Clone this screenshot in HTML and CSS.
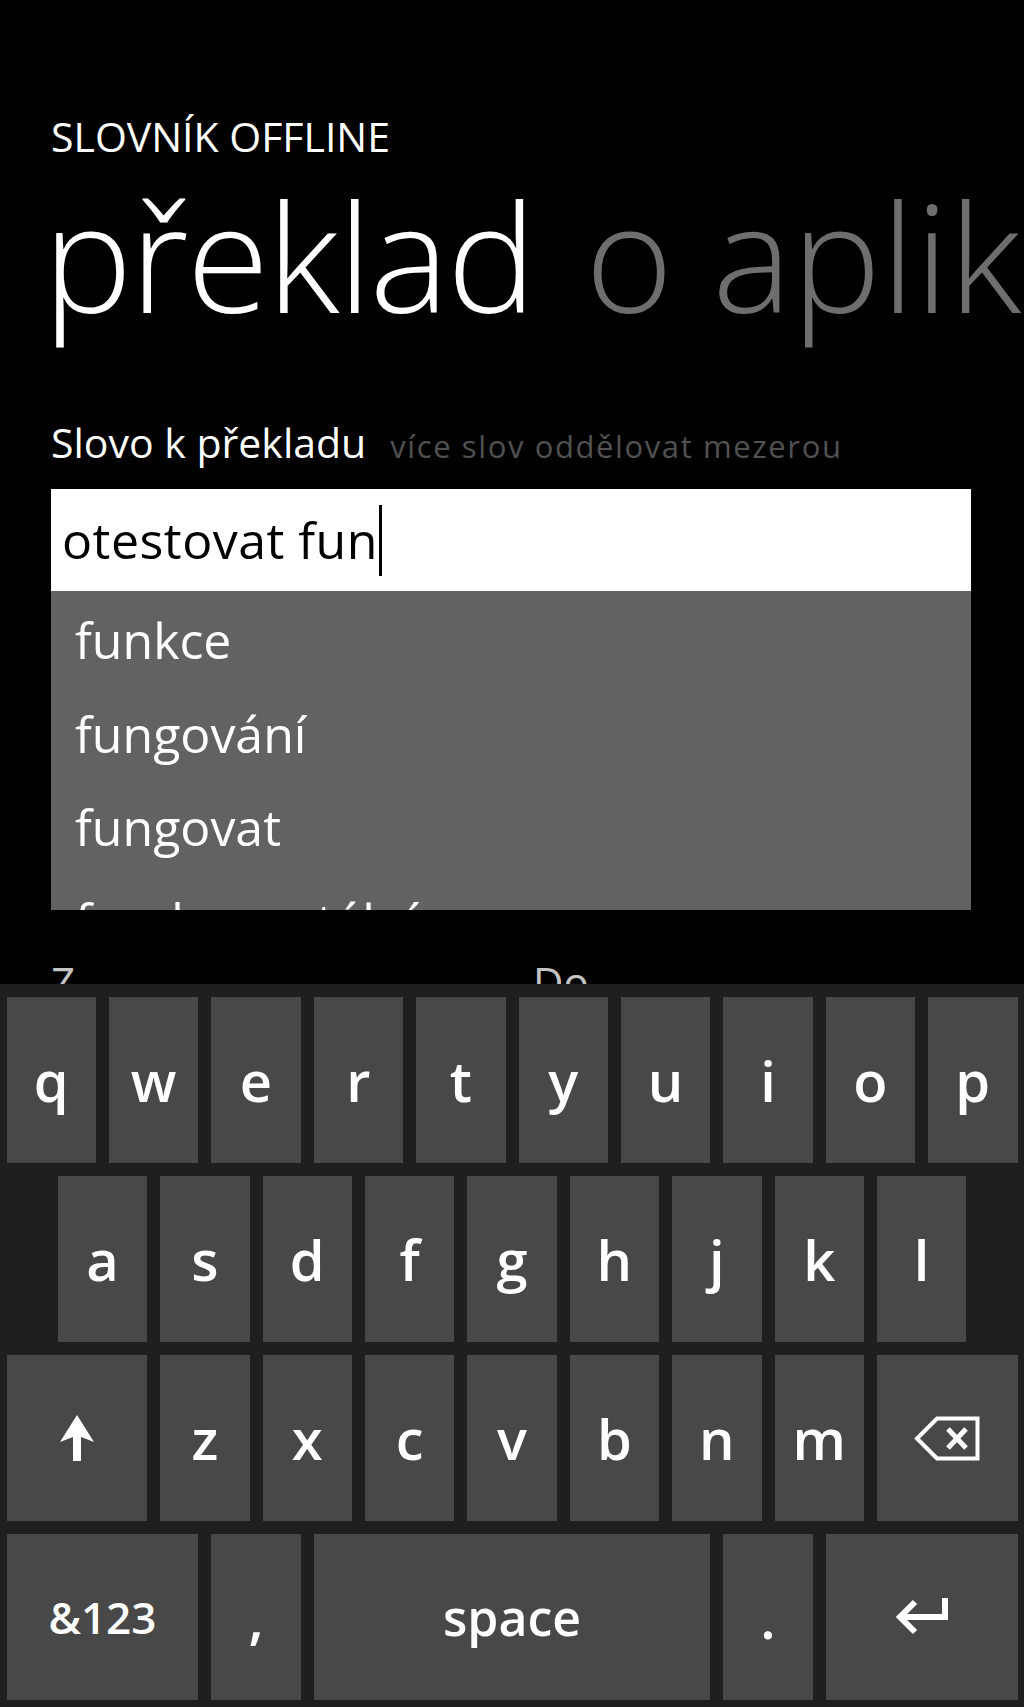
FILE: index.html
```html
<!DOCTYPE html>
<html lang="cs">
<head>
<meta charset="utf-8">
<title>Slovník offline</title>
<link rel="stylesheet" href="styles.css">
</head>
<body>
<div class="phone">
  <div class="content">
    <div class="app-title">SLOVNÍK OFFLINE</div>
    <div class="pivot-headers">
      <span class="pivot active">překlad</span>
      <span class="pivot">o aplikaci</span>
    </div>
    <div class="field-label">
      <span class="label">Slovo k překladu</span>
      <span class="hint">více slov oddělovat mezerou</span>
    </div>
    <div class="input-wrap">
      <div class="textbox"><span class="value">otestovat fun</span><span class="caret"></span></div>
      <ul class="suggestions">
        <li>funkce</li>
        <li>fungování</li>
        <li>fungovat</li>
        <li>fundamentální</li>
      </ul>
    </div>
    <div class="lang-row">
      <span class="lang-label">Z</span>
      <span class="lang-label">Do</span>
    </div>
  </div>
  <div class="keyboard">
    <div class="kb-row">
      <div class="key">q</div><div class="key">w</div><div class="key">e</div><div class="key">r</div><div class="key">t</div>
      <div class="key">y</div><div class="key">u</div><div class="key">i</div><div class="key">o</div><div class="key">p</div>
    </div>
    <div class="kb-row">
      <div class="spacer"></div>
      <div class="key">a</div><div class="key">s</div><div class="key">d</div><div class="key">f</div><div class="key">g</div>
      <div class="key">h</div><div class="key">j</div><div class="key">k</div><div class="key">l</div>
      <div class="spacer"></div>
    </div>
    <div class="kb-row">
      <div class="key wide3">
        <svg class="icon" width="34" height="46" viewBox="0 0 34 46"><path d="M17 0 L34 27 L21 22 L21 46 L13 46 L13 22 L0 27 Z" fill="#fff"/></svg>
      </div>
      <div class="key">z</div><div class="key">x</div><div class="key">c</div><div class="key">v</div>
      <div class="key">b</div><div class="key">n</div><div class="key">m</div>
      <div class="key wide3">
        <svg class="icon" width="66" height="45" viewBox="0 0 66 45"><path d="M23 2.5 H63.5 V42.5 H23 L3 22.5 Z" fill="none" stroke="#fff" stroke-width="4" stroke-linejoin="miter"/><path d="M34 13 L52 32 M52 13 L34 32" stroke="#fff" stroke-width="5"/></svg>
      </div>
    </div>
    <div class="kb-row">
      <div class="key wide4 small">&amp;123</div>
      <div class="key punct">,</div>
      <div class="key wide8 space">space</div>
      <div class="key punct">.</div>
      <div class="key wide4">
        <svg class="icon" width="54" height="38" viewBox="0 0 54 38"><path d="M50 0 V19 H8" fill="none" stroke="#fff" stroke-width="6"/><path d="M20 4 L5 19 L20 34" fill="none" stroke="#fff" stroke-width="6" stroke-linejoin="miter"/></svg>
      </div>
    </div>
  </div>
</div>
</body>
</html>
```

FILE: styles.css
```css
html, body {
  margin: 0;
  padding: 0;
  background: #000;
}

.phone {
  width: 1024px;
  height: 1707px;
  display: flex;
  flex-direction: column;
  background: #000;
  font-family: "Open Sans", "Noto Sans", "DejaVu Sans", sans-serif;
  color: #fff;
  overflow: hidden;
}

.content {
  height: 984px;
  flex: none;
  overflow: hidden;
  padding: 116px 0 0 51px;
  box-sizing: border-box;
}

.app-title {
  font-size: 41px;
  line-height: 41px;
  font-weight: 400;
  white-space: nowrap;
}

.pivot-headers {
  margin-top: 23px;
  margin-left: -8px;
  display: flex;
  gap: 51px;
  white-space: nowrap;
  font-size: 150px;
  line-height: 150px;
  font-weight: 300;
}

.pivot {
  color: #6e6e6e;
}

.pivot.active {
  color: #fff;
  letter-spacing: -2px;
}

.field-label {
  margin-top: 91px;
  display: flex;
  align-items: baseline;
  gap: 24px;
  white-space: nowrap;
}

.label {
  font-size: 41px;
  line-height: 42px;
}

.hint {
  font-size: 31px;
  line-height: 42px;
  letter-spacing: 1.6px;
  color: #515151;
}

.input-wrap {
  position: relative;
  margin-top: 22px;
  width: 920px;
}

.textbox {
  height: 102px;
  background: #fff;
  display: flex;
  align-items: center;
  padding-left: 11px;
  box-sizing: border-box;
}

.value {
  color: #000;
  font-size: 50px;
  line-height: 50px;
  letter-spacing: 0.5px;
  white-space: pre;
}

.caret {
  width: 3px;
  height: 71px;
  background: #000;
  margin-left: 1px;
}

.suggestions {
  position: absolute;
  top: 102px;
  left: 0;
  width: 920px;
  height: 319px;
  margin: 0;
  padding: 3px 0 0 24px;
  box-sizing: border-box;
  list-style: none;
  background: #626361;
  overflow: hidden;
}

.suggestions li {
  font-size: 50px;
  line-height: 93.5px;
  color: #fff;
  white-space: nowrap;
}

.lang-row {
  margin-top: 370px;
  display: grid;
  grid-template-columns: 482px 1fr;
}

.lang-label {
  font-size: 42px;
  line-height: 42px;
  color: #c4c4c4;
}

.keyboard {
  flex: none;
  height: 723px;
  background: #1f1f1f;
  padding-top: 6px;
  box-sizing: border-box;
}

.kb-row {
  height: 179.25px;
  display: grid;
  grid-template-columns: repeat(20, 1fr);
}

.key {
  grid-column: span 2;
  margin: 6.6px 6.5px;
  background: #484848;
  display: flex;
  align-items: center;
  justify-content: center;
  font-size: 56px;
  line-height: 1;
  font-weight: 600;
  color: #fff;
}

.spacer {
  grid-column: span 1;
}

.key.wide3 {
  grid-column: span 3;
}

.key.wide4 {
  grid-column: span 4;
}

.key.wide8 {
  grid-column: span 8;
}

.key.small {
  font-size: 44px;
}

.key.space {
  font-size: 50px;
}

.icon {
  display: block;
}
```
